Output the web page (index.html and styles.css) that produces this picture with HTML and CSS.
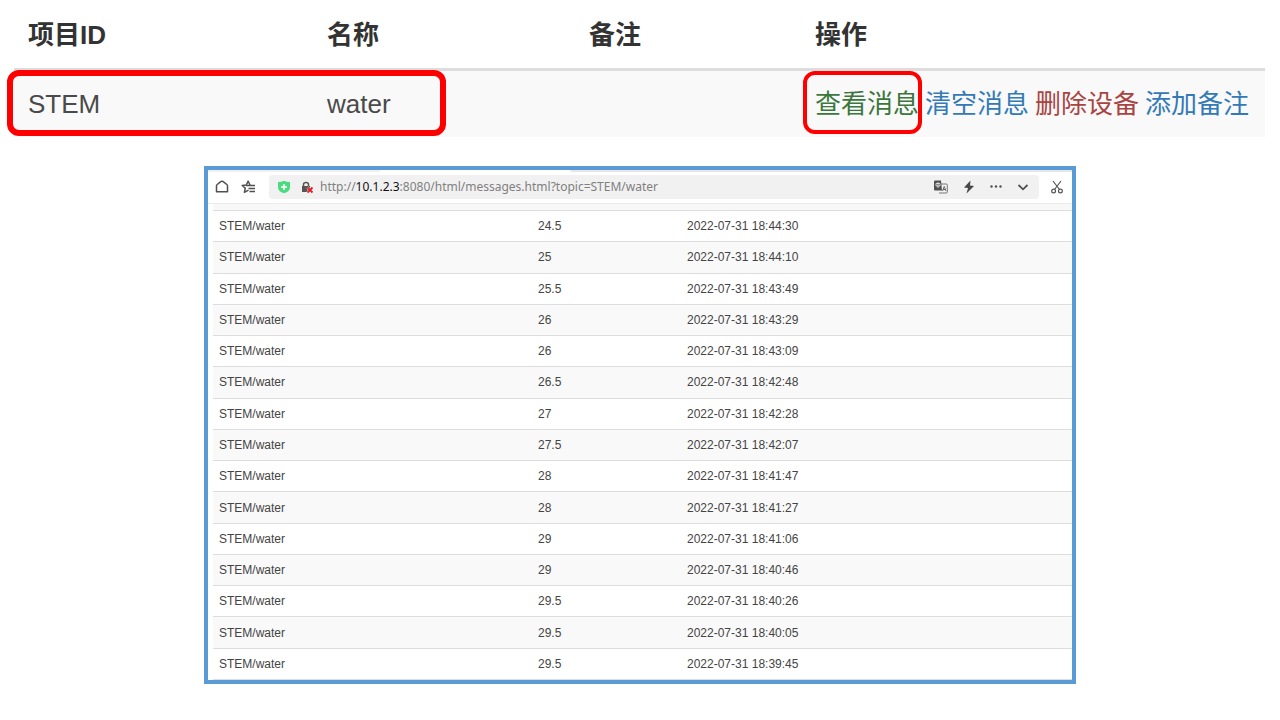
FILE: index.html
```
<!DOCTYPE html>
<html lang="zh-CN">
<head>
<meta charset="utf-8">
<title>项目消息</title>
<link rel="stylesheet" href="styles.css">
</head>
<body>
<section class="projects">
  <table class="project-table">
    <colgroup><col class="p-id"><col class="p-name"><col class="p-note"><col class="p-actions"></colgroup>
    <thead><tr><th>项目ID</th><th>名称</th><th>备注</th><th>操作</th></tr></thead>
    <tbody>
      <tr>
        <td>STEM</td><td>water</td><td></td>
        <td>
          <div class="actions">
            <a class="view" href="#messages">查看消息<span class="mark mark-view"></span></a>
            <a href="#clear">清空消息</a>
            <a class="delete" href="#delete">删除设备</a>
            <a href="#note">添加备注</a>
          </div>
        </td>
      </tr>
    </tbody>
  </table>
  <span class="mark mark-row"></span>
</section>

<main class="browser" id="messages">
  <div class="tabs"><span class="tab-left"></span><span class="tab-active"></span><span class="tab-right"></span></div>
  <div class="toolbar">
    <button class="icon-btn" aria-label="主页"><svg width="14" height="14" viewBox="0 0 14 14" fill="none" stroke="#505050" stroke-width="1.5" stroke-linejoin="round"><path d="M1.5 5.8Q1.5 5 2.2 4.5L5.5 1.8Q6 1.3 7 1.3T8.500 1.8L11.8 4.5Q12.5 5 12.5 5.8V11.8H1.5Z"/></svg></button>
    <button class="icon-btn" aria-label="收藏"><svg width="16" height="14" viewBox="0 0 16 14" fill="none" stroke="#505050" stroke-width="1.5"><path d="M7.2 1.200L5.300 5L1.200 5.400L4.300 8.200L3.400 12.300L7.500 10.200" stroke-linejoin="round"/><path d="M7.200 1.200L9 5" stroke-linecap="round"/><path d="M5 5.600H14M7.500 8.500H14M8.500 11.400H14"/></svg></button>
    <div class="address">
      <svg width="12" height="14" viewBox="0 0 12 14"><path d="M0 2Q3.5 2 6 .7Q8.500 2 12 2V7.500Q12 11.500 6 13.300Q0 11.500 0 7.500Z" fill="#4bdc80"/><path d="M6 4V10M3 7H9" stroke="#fff" stroke-width="1.6"/></svg>
      <svg class="lock" width="13" height="13" viewBox="0 0 13 13" fill="none"><path d="M1 5H9V11H1Z" fill="#555"/><path d="M2.500 5V3.500Q2.500 1.500 5 1.500T7.500 3.500V5" stroke="#555" stroke-width="1.500"/><path d="M6.500 6.500L11.500 11.500M11.500 6.500L6.500 11.500" stroke="#f1f1f1" stroke-width="2.800"/><path d="M6.500 6.500L11.500 11.500M11.500 6.500L6.500 11.500" stroke="#dc1f2b" stroke-width="1.800"/></svg>
      <span class="url" role="textbox" aria-label="地址">http://<b>10.1.2.3</b>:8080/html/messages.html?topic=STEM/water</span>
      <div class="address-tools">
        <button class="icon-btn" aria-label="翻译"><svg width="14" height="14" viewBox="0 0 14 14" fill="none"><path d="M6 4H12.300Q13.300 4 13.300 5V12Q13.300 13 12.300 13H5" stroke="#777"/><path d="M1 .5H7L8 10.500H1Q0 10.500 0 9.500V1.500Q0 .5 1 .5Z" fill="#505050"/><path d="M2 3.500H6V6H2ZM4 2V8" stroke="#eee" stroke-width=".8"/><path d="M8.500 11L10.200 6.500L12 11M9 9.500H11.500" stroke="#666"/></svg></button>
        <button class="icon-btn" aria-label="加速"><svg width="12" height="14" viewBox="0 0 12 14" fill="#484848"><path d="M7.500 .5L1 7.500L5 8L3.500 13.500L11 6L7 5.500Z"/></svg></button>
        <button class="icon-btn" aria-label="更多"><svg width="12" height="14" viewBox="0 0 12 14" fill="#505050"><circle cx="1.500" cy="6.500" r="1.200"/><circle cx="6" cy="6.500" r="1.200"/><circle cx="10.500" cy="6.500" r="1.200"/></svg></button>
        <button class="icon-btn" aria-label="展开"><svg width="12" height="14" viewBox="0 0 12 14" fill="none" stroke="#505050" stroke-width="1.800"><path d="M1.500 5L6 9.300L10.500 5"/></svg></button>
      </div>
    </div>
    <button class="icon-btn" aria-label="截图"><svg width="12" height="14" viewBox="0 0 12 14" fill="none" stroke="#555" stroke-width="1.200"><path d="M2 1L8.500 9.500M10 1L3.500 9.500"/><circle cx="2.600" cy="11" r="1.900"/><circle cx="9.400" cy="11" r="1.900"/></svg></button>
  </div>
  <div class="page">
    <table class="messages">
      <colgroup><col class="m-topic"><col class="m-value"><col></colgroup>
      <tbody>
        <tr><td>STEM/water</td><td>24.5</td><td>2022-07-31 18:44:30</td></tr>
        <tr><td>STEM/water</td><td>25</td><td>2022-07-31 18:44:10</td></tr>
        <tr><td>STEM/water</td><td>25.5</td><td>2022-07-31 18:43:49</td></tr>
        <tr><td>STEM/water</td><td>26</td><td>2022-07-31 18:43:29</td></tr>
        <tr><td>STEM/water</td><td>26</td><td>2022-07-31 18:43:09</td></tr>
        <tr><td>STEM/water</td><td>26.5</td><td>2022-07-31 18:42:48</td></tr>
        <tr><td>STEM/water</td><td>27</td><td>2022-07-31 18:42:28</td></tr>
        <tr><td>STEM/water</td><td>27.5</td><td>2022-07-31 18:42:07</td></tr>
        <tr><td>STEM/water</td><td>28</td><td>2022-07-31 18:41:47</td></tr>
        <tr><td>STEM/water</td><td>28</td><td>2022-07-31 18:41:27</td></tr>
        <tr><td>STEM/water</td><td>29</td><td>2022-07-31 18:41:06</td></tr>
        <tr><td>STEM/water</td><td>29</td><td>2022-07-31 18:40:46</td></tr>
        <tr><td>STEM/water</td><td>29.5</td><td>2022-07-31 18:40:26</td></tr>
        <tr><td>STEM/water</td><td>29.5</td><td>2022-07-31 18:40:05</td></tr>
        <tr><td>STEM/water</td><td>29.5</td><td>2022-07-31 18:39:45</td></tr>
      </tbody>
    </table>
  </div>
</main>
</body>
</html>
```
FILE: styles.css
```
* { box-sizing: border-box; }
body {
  margin: 0;
  background: #fff;
  color: #333;
  font-family: "Liberation Sans", "Noto Sans CJK SC", sans-serif;
}
table { width: 100%; border-collapse: separate; border-spacing: 0; table-layout: fixed; }
th, td { text-align: left; vertical-align: middle; }
a { text-decoration: none; }

.projects { position: relative; padding: 0 15px 0 14px; }
.project-table { font-size: 26px; line-height: 38px; }
.project-table th { padding: 16px 0 14px 14px; border-bottom: 3px solid #ddd; }
.project-table td { padding: 14px 0 14px 14px; background: #f9f9f9; color: #4a4a4a; }
.p-id { width: 299px; }
.p-name { width: 262px; }
.p-note { width: 226px; }
.actions { display: flex; gap: 6px; white-space: nowrap; }
.actions a { color: #337ab7; }
.actions .view { position: relative; color: #3c763d; }
.actions .delete { color: #a94442; }
.mark { position: absolute; border: 4px solid #f00; border-radius: 12px; pointer-events: none; }
.mark-view { inset: -14px -3px -11px -12px; }
.mark-row { left: 7px; bottom: 1px; width: 439px; height: 66px; border-width: 6px; }

.browser { margin: 29px 204px 0; border: 4px solid #5b9bd5; }
.tabs { display: flex; height: 2px; }
.tab-left { width: 172px; background: #f0f0f0; }
.tab-active { width: 190px; }
.tab-right { flex: 1; background: #e6e6e6; border-radius: 0 0 0 2px; }
.toolbar {
  display: flex;
  align-items: center;
  gap: 12px;
  height: 32px;
  padding: 0 9px 2px 7px;
  border-bottom: 1px solid #eaeaea;
}
.icon-btn { display: flex; padding: 0; border: 0; background: none; }
.address {
  display: flex;
  flex: 1;
  align-items: center;
  height: 24px;
  padding: 0 10px 0 9px;
  border-radius: 4px;
  background: #f1f1f1;
}
.lock { margin: 2px 6px 0 11px; }
.url { color: #808080; font: 12px/24px "Noto Sans", sans-serif; white-space: nowrap; }
.url b { color: #111; font-weight: 400; }
.address-tools { display: flex; gap: 15px; margin-left: auto; }

.page { padding: 6px 0 0 5px; background: linear-gradient(#f8f8f8, #f8f8f8) 5px 0 / 100% 6px no-repeat; }
.messages { height: 470px; border-bottom: 1px solid #ddd; color: #444; font-size: 12px; line-height: 16px; }
.messages td { padding: 0 0 0 6px; border-top: 1px solid #ddd; }
.messages tr:nth-child(even) { background: #f9f9f9; }
.m-topic { width: 319px; }
.m-value { width: 149px; }
```
